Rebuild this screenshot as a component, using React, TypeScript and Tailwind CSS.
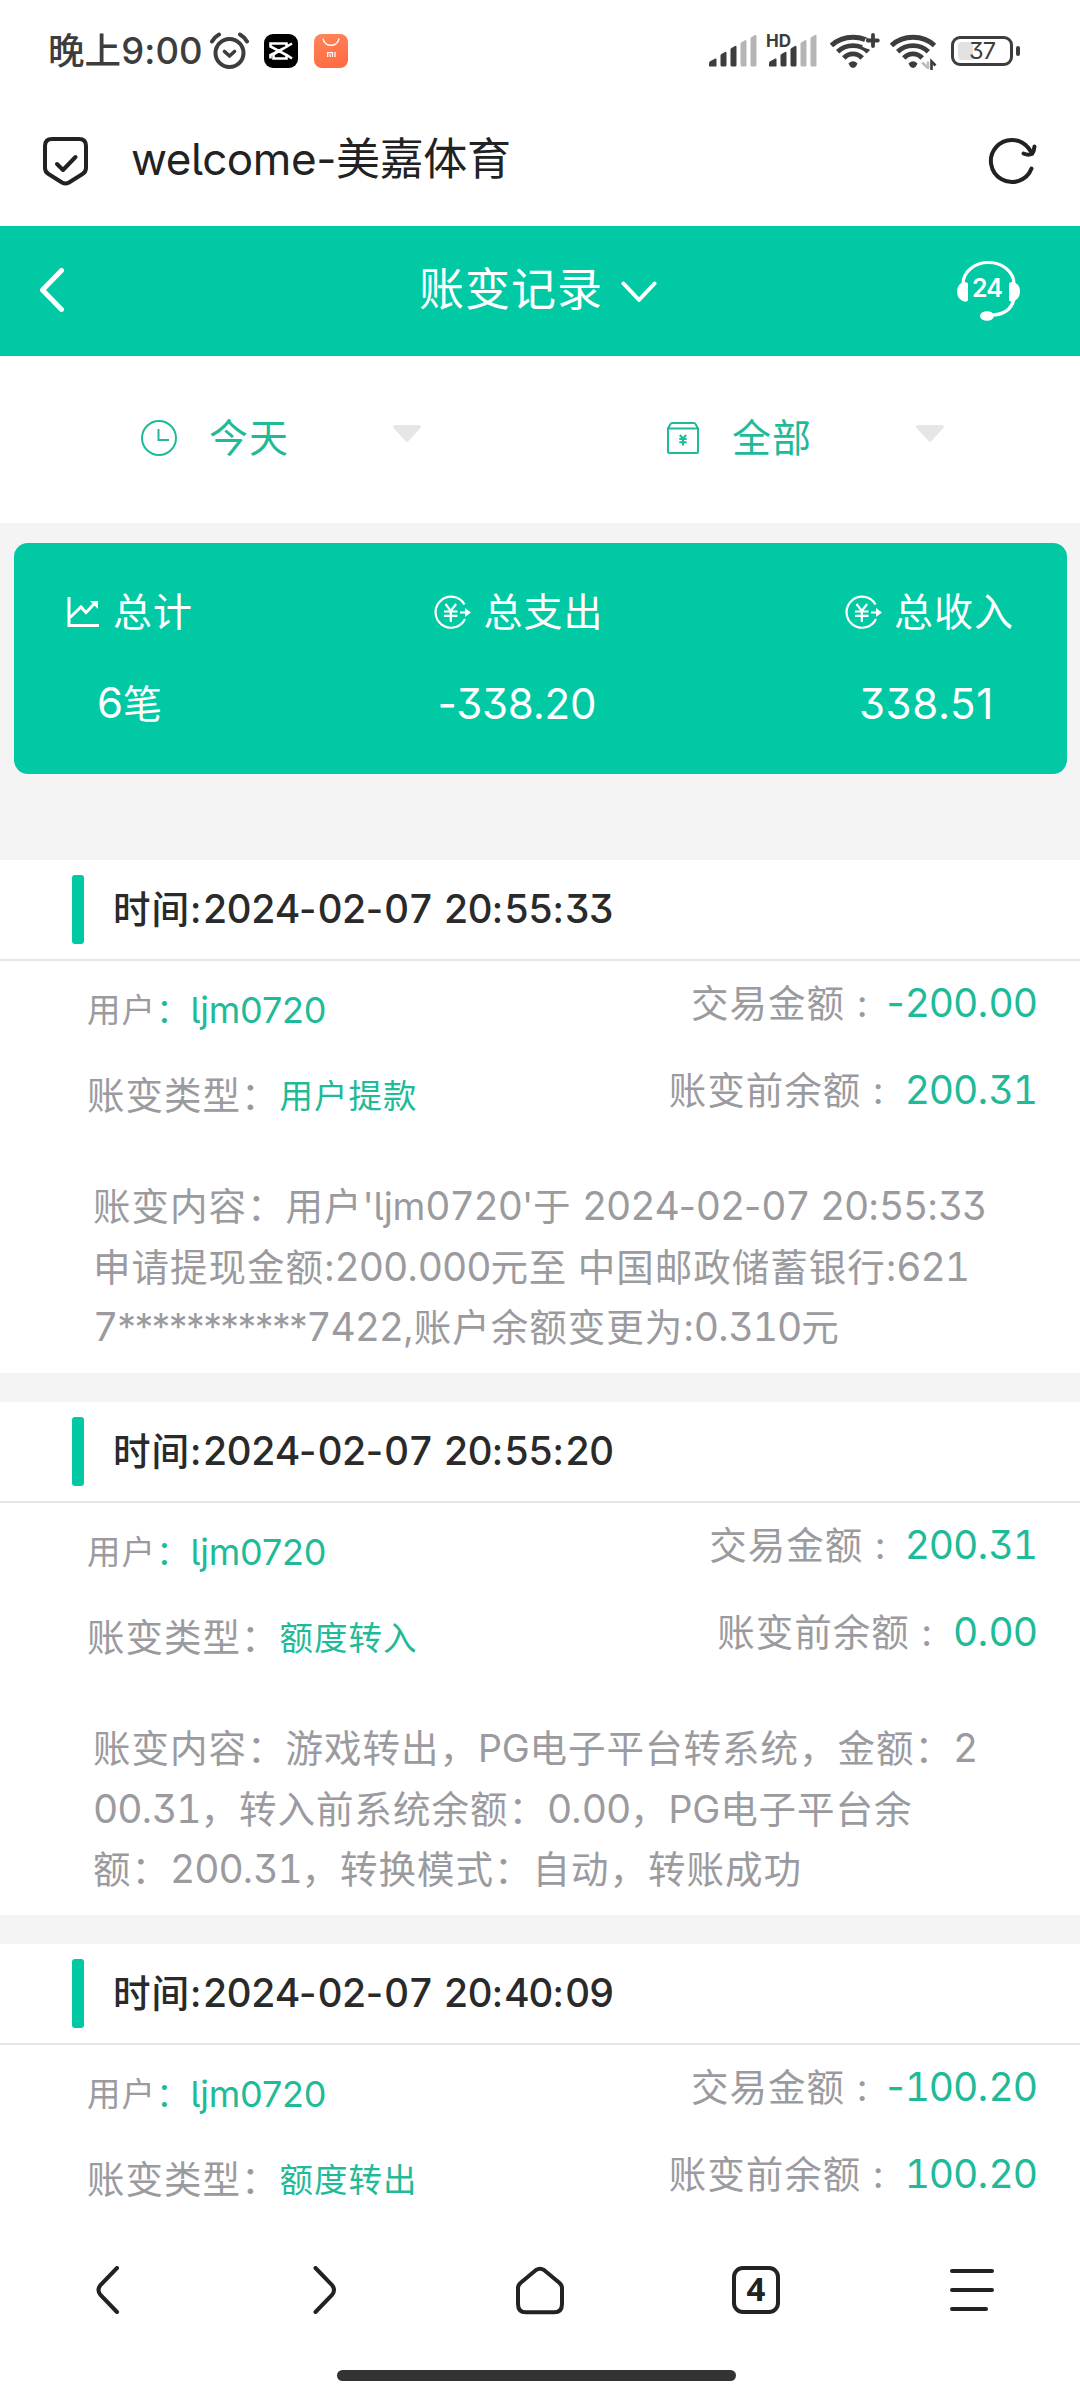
import type { ReactNode } from 'react';

type Transaction = {
  time: string;
  user: string;
  type: string;
  amount: string;
  before: string;
  lines: string[];
};

const transactions: Transaction[] = [
  {
    time: '2024-02-07 20:55:33',
    user: 'ljm0720',
    type: '用户提款',
    amount: '-200.00',
    before: '200.31',
    lines: [
      "账变内容：用户'ljm0720'于 2024-02-07 20:55:33",
      '申请提现金额:200.000元至 中国邮政储蓄银行:621',
      '7***********7422,账户余额变更为:0.310元',
    ],
  },
  {
    time: '2024-02-07 20:55:20',
    user: 'ljm0720',
    type: '额度转入',
    amount: '200.31',
    before: '0.00',
    lines: [
      '账变内容：游戏转出，PG电子平台转系统，金额：2',
      '00.31，转入前系统余额：0.00，PG电子平台余',
      '额：200.31，转换模式：自动，转账成功',
    ],
  },
  {
    time: '2024-02-07 20:40:09',
    user: 'ljm0720',
    type: '额度转出',
    amount: '-100.20',
    before: '100.20',
    lines: [],
  },
];

function SignalIcon() {
  return (
    <svg className="w-12 h-8" viewBox="0 0 48 32">
      <path d="M0 31v-2.500q0-1.500 1.200-2.200l5-2.800q1.300-.5 1.300 1V31q0 .5-.8.500H.8Q0 31.500 0 31z" fill="#3d3d3d" />
      <path d="M11.500 30V20.500q0-1 1-1.600l3.500-1.900q1.500-.7 1.500 1V30q0 1.500-1.500 1.500h-3q-1.500 0-1.500-1.500z" fill="#3d3d3d" />
      <path d="M21.500 30V14.500q0-1 1-1.600l3.500-1.900q1.500-.7 1.500 1V30q0 1.500-1.500 1.500h-3q-1.500 0-1.500-1.500z" fill="#3d3d3d" />
      <path d="M31.500 30V8.800q0-1 1-1.600L36 5.300q1.500-.7 1.500 1V30q0 1.500-1.500 1.500h-3q-1.500 0-1.500-1.500z" fill="#b5b5b5" />
      <path d="M41.500 30V3.500q0-1 1-1.600L46 0q1.500-.7 1.500 1V30q0 1.500-1.500 1.500h-3q-1.500 0-1.500-1.500z" fill="#b5b5b5" />
    </svg>
  );
}

function WifiIcon({ children }: { children: ReactNode }) {
  return (
    <svg className="w-[52px] h-[37px]" viewBox="0 0 52 37" fill="none" stroke="#3d3d3d">
      <path d="M1.500 12.500C13 1.500 33 1.500 44.500 12.500" strokeWidth="4.800" />
      <path d="M7.700 18.700C16 10.500 30 10.500 38.300 18.700" strokeWidth="4.800" />
      <path d="M13.800 25C19 19.500 27 19.500 32.200 25" strokeWidth="4.800" />
      <path d="M18.500 30.500Q23 26 27.500 30.500Q26 34.500 23 35Q20 34.500 18.500 30.500z" fill="#3d3d3d" stroke="none" />
      {children}
    </svg>
  );
}

function StatusBar() {
  return (
    <div className="h-[102px] flex items-center justify-between pl-12 pr-[60px]">
      <div className="flex items-center text-[#3d3d3d]">
        <span className="text-[36.5px] leading-[50px] font-medium w-[162px] whitespace-nowrap tracking-[0.1px]">晚上9:00</span>
        <svg className="w-10 h-[38px]" viewBox="0 0 40 38" fill="none" stroke="#3d3d3d" strokeLinecap="round">
          <circle cx="19.500" cy="21" r="14" strokeWidth="4" />
          <path d="M14.500 19.500l5 4.500 5-4.500" strokeWidth="3.600" strokeLinejoin="round" />
          <path d="M2 9.500Q4.500 5 9 2.500M37 9.500Q34.500 5 30 2.500" strokeWidth="4" />
        </svg>
        <svg className="ml-[14px] w-[34px] h-[34px]" viewBox="0 0 34 34">
          <rect width="34" height="34" rx="9" fill="#000" />
          <path d="M28 9.500L9.500 20.500V24.500H22.500V21L6.500 12.500V9.500H22.500V12.800L6.500 21V24.500M22 20.500L28 24.500" fill="none" stroke="#fff" strokeWidth="2.600" />
        </svg>
        <svg className="ml-4 w-[34px] h-[34px]" viewBox="0 0 34 34">
          <defs>
            <linearGradient id="mi" x1="0" y1="0" x2="0.300" y2="1">
              <stop offset="0" stopColor="#ff8659" />
              <stop offset="1" stopColor="#ff6c44" />
            </linearGradient>
          </defs>
          <rect width="34" height="34" rx="8" fill="url(#mi)" />
          <path d="M9 4.500C10.500 13.500 23.500 13.500 25 4.500" fill="none" stroke="#fff" strokeWidth="1.500" />
          <path d="M13.700 23V18.700h4.800V23M16.100 20.300V23M21 18.100V23" fill="none" stroke="#fff" strokeWidth="1.200" />
        </svg>
      </div>
      <div className="flex items-center">
        <SignalIcon />
        <div className="relative ml-3">
          <SignalIcon />
          <span className="absolute -left-[3px] -top-[2px] text-[17px] leading-4 font-bold text-[#3d3d3d]">HD</span>
        </div>
        <div className="ml-[13px]">
          <WifiIcon>
            <path d="M34 9.500L40 12M43 1v13" stroke="#fff" strokeWidth="9" />
            <path d="M37.800 7.500h10M43 2v11" strokeWidth="3.800" strokeLinecap="round" />
          </WifiIcon>
        </div>
        <div className="ml-2">
          <WifiIcon>
            <path d="M38 28.500V36M38 35l-6-5.500" stroke="#bdbdbd" strokeWidth="2.600" />
            <path d="M41.500 37V28.500l4 4" strokeWidth="2.600" />
          </WifiIcon>
        </div>
        <div className="ml-[9px] flex items-center">
          <div className="relative w-[62px] h-[30px] rounded-[9px] border-[3px] border-[#3d3d3d] flex items-center justify-center">
            <div className="absolute left-1 top-[3px] w-[15px] h-[18px] rounded-l-[4px] bg-[#e2e2e2]"></div>
            <span className="relative text-[23.5px] leading-6 text-[#3d3d3d] tracking-[-1px]">37</span>
          </div>
          <div className="ml-[3px] w-1 h-[10px] rounded-[2px] bg-[#3d3d3d]"></div>
        </div>
      </div>
    </div>
  );
}

function BrowserBar() {
  return (
    <div className="h-[124px] pb-[7px] flex items-center pl-[42px] pr-[43px] text-[#222]">
      <svg className="w-[47px] h-[50px]" viewBox="0 0 47 50" fill="none" stroke="#222" strokeWidth="4" strokeLinecap="round" strokeLinejoin="round">
        <path d="M10 3h27q7 0 7 7v22q0 4-3.500 6L27 46.500q-3.500 2-7 0L6.500 38Q3 36 3 32V10q0-7 7-7z" />
        <path d="M15 28l6 6 12.500-13" />
      </svg>
      <span className="ml-[42px] -mt-1 flex-1 text-[44px] leading-[60px] whitespace-nowrap tracking-[-0.4px]">welcome-美嘉体育</span>
      <svg className="w-[50px] h-[50px]" viewBox="0 0 50 50" fill="none" stroke="#222" strokeWidth="4" strokeLinecap="round" strokeLinejoin="round">
        <path d="M44.500 32.500A21 21 0 1 1 41 11.500L45 17" />
        <path d="M36.500 17.500Q41 19.500 45 18Q47 15.500 47.500 10.500" />
      </svg>
    </div>
  );
}

function PageHeader() {
  return (
    <div className="h-[130px] bg-[#00c9a3] flex items-center justify-between pl-10 pr-[60px] text-white">
      <svg className="w-6 h-11 -mt-[2px]" viewBox="0 0 24 44" fill="none" stroke="#fff" strokeWidth="5" strokeLinecap="round" strokeLinejoin="round">
        <path d="M21.500 2.500L2.500 22l19 19.500" />
      </svg>
      <div className="flex items-center pl-[55px] pb-[3px]">
        <span className="text-[45px] leading-[60px] tracking-[1px] whitespace-nowrap">账变记录</span>
        <svg className="ml-[18px] mt-1 w-9 h-[22px]" viewBox="0 0 36 22" fill="none" stroke="#fff" strokeWidth="4" strokeLinecap="round" strokeLinejoin="round">
          <path d="M2.500 2.500L18 19 33.500 2.500" />
        </svg>
      </div>
      <div className="relative w-[63px] h-[60px]">
        <svg className="w-[63px] h-[60px]" viewBox="0 0 63 60">
          <path d="M6 23A25.500 21.500 0 0 1 57 23M57 38Q53 54 34 54" fill="none" stroke="#fff" strokeWidth="3.200" />
          <path d="M11 22.500v17Q10 41 7 40.500 0 38 0 30.500T7 21q3-.5 4 1.500z" fill="#fff" />
          <path d="M52 22.500v17q1 1.500 4 1 7-2.500 7-10T56 21q-3-.5-4 1.500z" fill="#fff" />
          <ellipse cx="30" cy="55" rx="7" ry="4.800" fill="#fff" />
        </svg>
        <span className="absolute left-[15px] top-3 text-[25px] leading-[31px] font-semibold tracking-[-1px]">24</span>
      </div>
    </div>
  );
}

function FilterBar() {
  return (
    <div className="h-[167px] pb-[3px] flex items-center text-[#1fba98] text-[39px] leading-[60px] tracking-[1px]">
      <div className="w-1/2 flex items-center pl-[141px]">
        <svg className="w-9 h-9" viewBox="0 0 36 36" fill="none" stroke="#1fba98" strokeWidth="2">
          <circle cx="18" cy="18" r="17" />
          <path d="M17.500 9v11H28" />
        </svg>
        <span className="ml-8 w-[184px]">今天</span>
        <Caret />
      </div>
      <div className="w-1/2 flex items-center pl-[127px]">
        <svg className="w-8 h-8" viewBox="0 0 32 32" fill="none" stroke="#1fba98" strokeWidth="2">
          <path d="M1 6.500v23Q1 31 2.500 31h27q1.500 0 1.500-1.500v-23zM1 6.500L3.500 2Q4 1 5 1h22q1 0 1.500 1L31 6.500" />
          <path d="M12.800 13L16 16.500l3.200-3.500M16 16.500V23.500M12.300 17h7.400M12.300 20.300h7.400" />
        </svg>
        <span className="ml-[33px] w-[184px]">全部</span>
        <Caret />
      </div>
    </div>
  );
}

function Caret() {
  return (
    <svg className="w-7 h-[17px] -mt-[9px]" viewBox="0 0 28 17">
      <path d="M3 0h22q4 0 2.500 3L15.500 16q-1.500 1.500-3 0L.5 3Q-1 0 3 0z" fill="#e6e6e6" />
    </svg>
  );
}

function YenIcon() {
  return (
    <svg className="w-[37px] h-[34px]" viewBox="0 0 37 34" fill="none" stroke="#fff" strokeWidth="2.200">
      <path d="M30.500 9.500A15.500 15.500 0 1 0 31 24" />
      <path d="M11.500 9l5.300 7 5.300-7M16.800 16v11M10 16.500h13.500M10 20.800h13.500M26 17.500h7" />
      <path d="M31 13l6 4.500-6 4.500z" fill="#fff" stroke="none" />
    </svg>
  );
}

function SummaryCard() {
  return (
    <div className="ml-[14px] mr-[13px] mt-5 h-[231px] rounded-[14px] bg-[#00c9a3] text-white text-[39px] leading-[60px] tracking-[1px] pt-[39px] pl-[53px] pr-[53px] flex justify-between whitespace-nowrap">
      <div>
        <div className="flex items-center">
          <svg className="w-8 h-[30px]" viewBox="0 0 32 30" fill="none" stroke="#fff" strokeWidth="3">
            <path d="M2 0v28.500h30M3 20.500L14 10l5 5.500L28 6" />
            <path d="M23 4h8v8z" fill="#fff" stroke="none" />
          </svg>
          <span className="ml-[14px]">总计</span>
        </div>
        <div className="mt-[31px] h-[60px] pl-[30px] tracking-normal">
          <span className="text-[42px]">6</span>笔
        </div>
      </div>
      <div>
        <div className="flex items-center">
          <YenIcon />
          <span className="ml-3">总支出</span>
        </div>
        <div className="mt-8 pl-[3px] text-[42px] tracking-[-0.2px]">-338.20</div>
      </div>
      <div>
        <div className="flex items-center">
          <YenIcon />
          <span className="ml-3">总收入</span>
        </div>
        <div className="mt-8 pl-[14px] text-[42px] tracking-[0.6px]">338.51</div>
      </div>
    </div>
  );
}

// Digits are set a little larger than the Chinese text, asterisks a little tighter
function MixedText({ text, tight = false }: { text: string; tight?: boolean }) {
  return (
    <>
      {text.split(/([0-9]+|\*+|[A-Za-z',.: -]+)/).map((part, i) => {
        if (i % 2 === 0) return part;
        if (part[0] === '*') {
          return <span key={i} className="tracking-[-1.6px]">{part}</span>;
        }
        if (/[0-9]/.test(part)) {
          return (
            <span key={i} className="text-[39px] tracking-[-1.1px] [font-feature-settings:'tnum','cv09']">{part}</span>
          );
        }
        return <span key={i} className={tight ? 'tracking-[-0.2px]' : ''}>{part}</span>;
      })}
    </>
  );
}

function Record({ item }: { item: Transaction }) {
  return (
    <div className="h-[513px] shrink-0 mb-[29px] bg-white text-[#9b9b9f] tracking-[1px] whitespace-nowrap">
      {/* Heure */}
      <div className="h-[101px] border-b-2 border-[#e6e6e6] flex items-center pl-[72px]">
        <div className="w-3 h-[69px] rounded-[3px] bg-[#00c9a3]"></div>
        <div className="ml-[29px] h-[60px] text-[37.5px] leading-[58px] font-medium text-[#2a2a2a]">
          时间:<MixedText text={item.time} />
        </div>
      </div>
      <div className="flex justify-between pl-[87px] pr-[43px]">
        <div className="pt-[6px]">
          <div className="h-[86px] flex items-center text-[33.5px]">
            <span>用户</span>
            <span className="text-[#1fba98]">：</span>
            <span className="text-[#1fba98] text-[36px] tracking-[-0.2px]">{item.user}</span>
          </div>
          <div className="h-[86px] flex items-center text-[37.5px]">
            <span>账变类型：</span>
            <span className="text-[#1fba98] text-[33.5px]">{item.type}</span>
          </div>
        </div>
        <div className="pt-px">
          <div className="h-[84px] flex items-center justify-end">
            <span className="text-[37.5px]">交易金额 :</span>
            <span className="ml-[18px] text-[39.5px] tracking-normal text-[#1fba98]">
              <MixedText text={item.amount} />
            </span>
          </div>
          <div className="h-[90px] flex items-center justify-end">
            <span className="text-[37.5px]">账变前余额 :</span>
            <span className="ml-[20px] text-[39.5px] tracking-normal text-[#1fba98]">
              <MixedText text={item.before} />
            </span>
          </div>
        </div>
      </div>
      <div className="mt-[37px] pl-[93px] text-[37.5px] leading-[60.5px]">
        {item.lines.map((line) => (
          <div key={line} className="h-[60.5px]">
            <MixedText text={line} tight />
          </div>
        ))}
      </div>
    </div>
  );
}

function BottomNav() {
  return (
    <div className="h-[190px] shrink-0 bg-white">
      <div className="h-40 grid grid-cols-5 items-center justify-items-center">
        <svg className="w-12 h-12" viewBox="0 0 48 48" fill="none" stroke="#222" strokeWidth="4" strokeLinecap="round">
          <path d="M33 2L16.500 19Q12.500 24 16.500 29L33 46" />
        </svg>
        <svg className="w-12 h-12" viewBox="0 0 48 48" fill="none" stroke="#222" strokeWidth="4" strokeLinecap="round">
          <path d="M15.500 2L32 19Q36 24 32 29L15.500 46" />
        </svg>
        <svg className="w-12 h-[50px]" viewBox="0 0 48 50" fill="none" stroke="#222" strokeWidth="4" strokeLinejoin="round">
          <path d="M5 17.500L20 5Q24 2.500 28 5L43 17.500Q46 20 46 23V39Q46 47.300 38 47.300H10Q2 47.300 2 39V23Q2 20 5 17.500z" />
        </svg>
        <div className="w-12 h-12 rounded-[11px] border-4 border-[#222] flex items-center justify-center">
          <span className="text-[33px] leading-8 -mt-[3px] font-bold text-[#222] font-['Noto_Sans']">4</span>
        </div>
        <div className="w-11 flex flex-col gap-[15px]">
          <div className="w-11 h-1 rounded-full bg-[#222]"></div>
          <div className="w-11 h-1 rounded-full bg-[#222]"></div>
          <div className="w-[38px] h-1 rounded-full bg-[#222]"></div>
        </div>
      </div>
      <div className="ml-[337px] w-[399px] h-[11px] rounded-full bg-[#333]"></div>
    </div>
  );
}

export default function App() {
  return (
    <div className="w-[1080px] h-[2400px] overflow-hidden flex flex-col bg-white font-['Inter','Noto_Sans_CJK_SC',sans-serif] [font-feature-settings:'cv09','cv05']">
      <StatusBar />
      <BrowserBar />
      <PageHeader />
      <FilterBar />
      <div className="flex-1 min-h-0 overflow-hidden bg-[#f4f4f4]">
        <SummaryCard />
        <div className="mt-[86px]">
          {transactions.map((item) => (
            <Record key={item.time} item={item} />
          ))}
        </div>
      </div>
      <BottomNav />
    </div>
  );
}
